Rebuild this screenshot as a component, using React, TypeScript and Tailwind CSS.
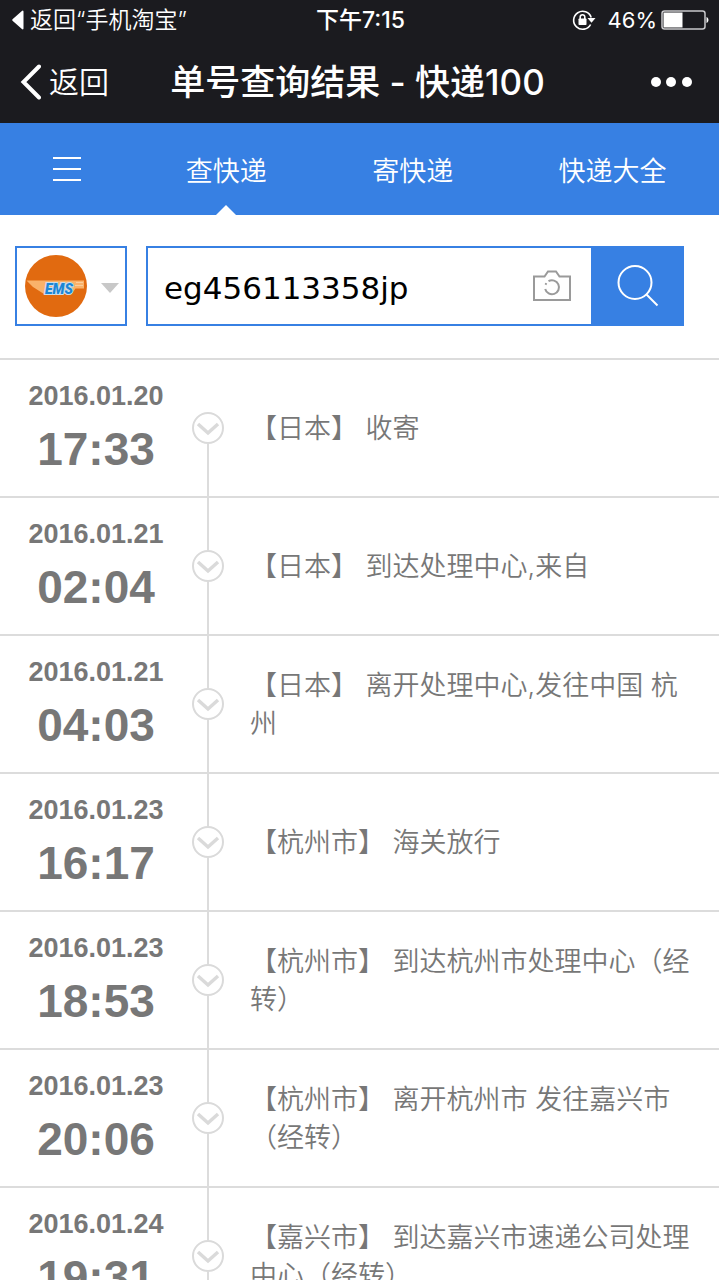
import React, { useState } from 'react';

interface TrackEvent {
  date: string;
  time: string;
  text: string;
}

const events: TrackEvent[] = [
  { date: '2016.01.20', time: '17:33', text: '【日本】 收寄' },
  { date: '2016.01.21', time: '02:04', text: '【日本】 到达处理中心,来自' },
  { date: '2016.01.21', time: '04:03', text: '【日本】 离开处理中心,发往中国 杭州' },
  { date: '2016.01.23', time: '16:17', text: '【杭州市】 海关放行' },
  { date: '2016.01.23', time: '18:53', text: '【杭州市】 到达杭州市处理中心（经转）' },
  { date: '2016.01.23', time: '20:06', text: '【杭州市】 离开杭州市 发往嘉兴市（经转）' },
  { date: '2016.01.24', time: '19:31', text: '【嘉兴市】 到达嘉兴市速递公司处理中心（经转）' },
];

const StatusBar: React.FC = () => (
  <div className="grid grid-cols-[1fr_auto_1fr] items-center h-10 pl-3 pr-2.5 text-[23px] leading-10">
    <a href="#taobao" className="flex items-center gap-1.5 font-[350]">
      <svg width="12" height="20" viewBox="0 0 12 20" fill="currentColor" aria-hidden="true">
        <path d="M11.5 1.5v17a1 1 0 0 1-1.6.6L.8 11a1.300 1.300 0 0 1 0-2L9.900.9a1 1 0 0 1 1.600.6z" />
      </svg>
      返回“手机淘宝”
    </a>
    <span className="font-medium">下午7:15</span>
    <div className="flex items-center justify-end">
      <svg width="24" height="22" viewBox="0 0 24 22" fill="none" stroke="currentColor" strokeWidth="1.600" className="mr-3" aria-hidden="true">
        <path d="M18.600 15.500A9 9 0 1 1 19.200 8.500" />
        <path d="M15.500 9h8l-4 4.800z" fill="currentColor" stroke="none" />
        <rect x="6.500" y="9.500" width="8" height="6.500" rx="0.800" fill="currentColor" stroke="none" />
        <path d="M8.200 10V8a2.300 2.300 0 0 1 4.600 0v2" />
      </svg>
      <span className="mr-1 text-[22px]">46%</span>
      <svg width="48" height="20" viewBox="0 0 48 20" fill="none" aria-hidden="true">
        <rect x="1" y="1" width="43" height="18" rx="2.500" stroke="#c9c9cc" strokeWidth="1.500" />
        <rect x="2.500" y="2.500" width="19" height="15" fill="white" />
        <path d="M45.500 7c2.600.7 2.600 5.300 0 6z" fill="white" />
      </svg>
    </div>
  </div>
);

const TitleBar: React.FC = () => (
  <div className="grid grid-cols-[1fr_auto_1fr] items-center h-[83px] pl-5 pr-6">
    <button type="button" className="flex items-center gap-2 text-[30px] leading-10 font-[350]">
      <svg width="21" height="36" viewBox="0 0 21 36" fill="none" stroke="currentColor" strokeWidth="4" aria-hidden="true">
        <path d="M19 2.500L3.500 18 19 33.500" strokeLinecap="round" />
      </svg>
      返回
    </button>
    <h1 className="text-[35px] leading-10 font-medium">单号查询结果 - 快递100</h1>
    <button type="button" aria-label="更多" className="justify-self-end">
      <svg width="46" height="12" viewBox="0 0 46 12" fill="currentColor" aria-hidden="true">
        <circle cx="7" cy="6" r="5" />
        <circle cx="22" cy="6" r="5" />
        <circle cx="38" cy="6" r="5" />
      </svg>
    </button>
  </div>
);

const Tabs: React.FC = () => (
  <nav className="flex h-[92px] bg-[#3780e3] text-white text-[27px] font-[350]">
    <button type="button" aria-label="菜单" className="w-[133px] flex items-center justify-center">
      <svg width="28" height="26" viewBox="0 0 28 26" stroke="currentColor" strokeWidth="2" aria-hidden="true">
        <path d="M0 2h28M0 13h28M0 24h28" />
      </svg>
    </button>
    <a href="#query" className="relative flex-[7] flex items-center justify-center pt-1.5">
      查快递
      <svg width="20" height="10" viewBox="0 0 20 10" fill="white" className="absolute bottom-0 left-1/2 -translate-x-1/2" aria-hidden="true">
        <path d="M0 10L10 0l10 10z" />
      </svg>
    </a>
    <a href="#send" className="flex-[7] flex items-center justify-center pt-1.5">寄快递</a>
    <a href="#all" className="flex-[8] flex items-center justify-center pt-1.5">快递大全</a>
  </nav>
);

const SearchForm: React.FC = () => {
  const [number, setNumber] = useState('eg456113358jp');

  return (
    <form className="flex pl-[15px] pr-[35px] pt-[31px] pb-8" onSubmit={(e) => e.preventDefault()}>
      <label className="relative flex items-center justify-between w-28 h-20 pl-2 pr-1.5 mr-[19px] border-2 border-[#3780e3]">
        <svg width="62" height="62" viewBox="0 0 62 62" aria-hidden="true">
          <circle cx="31" cy="31" r="31" fill="#e16a10" />
          <path d="M1.500 25.500H59v8h-8.500l-4 5.500H19L8 32z" fill="#f9b26a" />
          <path d="M51 27.500h7M50 30.500h8" stroke="#fbcd9c" strokeWidth="1" />
          <text x="20" y="38.500" fontFamily="Roboto, sans-serif" fontSize="14" fontWeight="900" fontStyle="italic" fill="#1b86d6" stroke="#c9dcea" strokeWidth="2" paintOrder="stroke">EMS</text>
        </svg>
        <svg width="18" height="10" viewBox="0 0 18 10" fill="#c8c8c8" className="mt-1" aria-hidden="true">
          <path d="M0 0h18l-9 10z" />
        </svg>
        <select aria-label="快递公司" className="absolute inset-0 w-full h-full opacity-0">
          <option>EMS</option>
        </select>
      </label>
      <div className="flex flex-1 min-w-0 items-center border-2 border-r-0 border-[#3780e3]">
        <input
          type="text"
          aria-label="快递单号"
          value={number}
          onChange={(e) => setNumber(e.target.value)}
          className="flex-1 min-w-0 h-full pl-4 pt-1 text-[31px] text-black outline-none font-['DejaVu_Sans',sans-serif]"
        />
        <button type="button" aria-label="扫描单号" className="px-5">
          <svg width="38" height="32" viewBox="0 0 38 32" fill="none" stroke="#9a9a9a" strokeWidth="2" aria-hidden="true">
            <path d="M1 6.500h10.500l3.500-5h8l3.500 5H37V30H1z" />
            <path d="M15.500 11.200A7 7 0 1 1 12.200 19" />
            <path d="M12.500 14.700l.8-1.600" />
          </svg>
        </button>
      </div>
      <button type="submit" aria-label="查询" className="w-[93px] flex items-center justify-center bg-[#3780e3] text-white">
        <svg width="42" height="42" viewBox="0 0 42 42" fill="none" stroke="currentColor" strokeWidth="2" aria-hidden="true">
          <circle cx="18" cy="17.500" r="16.500" />
          <path d="M29 29L40.500 40.500" />
        </svg>
      </button>
    </form>
  );
};

const EventRow: React.FC<{ event: TrackEvent; first: boolean }> = ({ event, first }) => (
  <li className="flex min-h-[138px] border-t-2 border-[#dcdcdc] text-[#777]">
    <div className="w-48 flex flex-col items-center justify-center pt-0.5 font-bold font-['Liberation_Sans',sans-serif]">
      <span className="text-[27px] leading-10">{event.date}</span>
      <span className="text-[46px] leading-[66px]">{event.time}</span>
    </div>
    <div className="flex flex-col items-center w-8">
      <div className={first ? 'flex-1' : 'flex-1 w-0.5 bg-[#dcdcdc]'}></div>
      <svg width="32" height="32" viewBox="0 0 32 32" fill="none" stroke="#dadada" aria-hidden="true">
        <circle cx="16" cy="16" r="15" strokeWidth="2" />
        <path d="M6 12l10 9 10-9" strokeWidth="3.500" />
      </svg>
      <div className="flex-1 w-0.5 bg-[#dcdcdc]"></div>
    </div>
    <p className="flex-1 self-center pl-[26px] pr-5 pt-0.5 text-[27px] leading-[38px] font-[350]">{event.text}</p>
  </li>
);

const App: React.FC = () => {
  return (
    <div className="min-h-screen bg-white font-['Inter','Noto_Sans_CJK_SC',sans-serif]">
      <header className="bg-[#1b1b1f] text-white">
        <StatusBar />
        <TitleBar />
      </header>
      <Tabs />
      <main>
        <SearchForm />
        <ul>
          {events.map((event, i) => (
            <EventRow key={event.date + event.time} event={event} first={i === 0} />
          ))}
        </ul>
      </main>
    </div>
  );
};

export default App;
